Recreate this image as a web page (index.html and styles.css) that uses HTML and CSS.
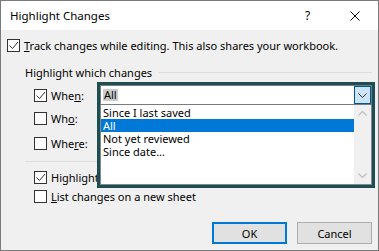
FILE: index.html
```html
<!DOCTYPE html>
<html>
<head>
<meta charset="utf-8">
<link rel="stylesheet" href="styles.css">
</head>
<body>
<div class="window">
  <div class="titlebar">
    <span class="title">Highlight Changes</span>
    <span class="help">?</span>
    <svg class="close" width="10" height="10" viewBox="0 0 10 10"><path d="M0.5 0.5 L9.5 9.5 M9.5 0.5 L0.5 9.5" stroke="#000" stroke-width="1" fill="none"/></svg>
  </div>
  <div class="content">
    <label class="row track">
      <span class="cb"><svg width="11" height="11" viewBox="0 0 11 11"><path d="M1.5 5.5 L4.5 8.5 L10 2" stroke="#333" stroke-width="1" fill="none"/></svg></span>
      <span><u>T</u>rack changes while editing. This also shares your workbook.</span>
    </label>
    <div class="group-head">
      <span>Highlight which changes</span>
      <span class="line"></span>
    </div>
    <div class="opts">
      <label class="row opt when">
        <span class="cb"><svg width="11" height="11" viewBox="0 0 11 11"><path d="M1.5 5.5 L4.5 8.5 L10 2" stroke="#333" stroke-width="1" fill="none"/></svg></span>
        <span>Whe<u>n</u>:</span>
      </label>
      <label class="row opt who">
        <span class="cb"></span>
        <span>Wh<u>o</u>:</span>
      </label>
      <label class="row opt where">
        <span class="cb"></span>
        <span>Whe<u>r</u>e:</span>
      </label>
      <div class="sep"></div>
      <label class="row opt hl">
        <span class="cb"><svg width="11" height="11" viewBox="0 0 11 11"><path d="M1.5 5.5 L4.5 8.5 L10 2" stroke="#333" stroke-width="1" fill="none"/></svg></span>
        <span>Highlight changes on <u>s</u>creen</span>
      </label>
      <label class="row opt list">
        <span class="cb"></span>
        <span><u>L</u>ist changes on a new sheet</span>
      </label>
    </div>
    <div class="buttons">
      <button class="btn ok">OK</button>
      <button class="btn">Cancel</button>
    </div>
  </div>
  <div class="dropdown">
    <div class="combo">
      <span class="value">All</span>
      <span class="arrow"><svg width="9" height="5" viewBox="0 0 9 5"><path d="M0.5 0.5 L4.5 4.5 L8.5 0.5" stroke="#333" stroke-width="1" fill="none"/></svg></span>
    </div>
    <div class="listbox">
      <ul class="items">
        <li>Since I last saved</li>
        <li class="sel">All</li>
        <li>Not yet reviewed</li>
        <li>Since date...</li>
      </ul>
      <div class="scroll">
        <svg width="9" height="5" viewBox="0 0 9 5"><path d="M0.5 4.5 L4.5 0.5 L8.5 4.5" stroke="#c0c0c0" stroke-width="1.3" fill="none"/></svg>
        <svg width="9" height="5" viewBox="0 0 9 5"><path d="M0.5 0.5 L4.5 4.5 L8.5 0.5" stroke="#c0c0c0" stroke-width="1.3" fill="none"/></svg>
      </div>
    </div>
  </div>
</div>
</body>
</html>
```

FILE: styles.css
```css
* { box-sizing: border-box; }
html, body { margin: 0; padding: 0; background: #f0f0f0; }
body { font-family: "Noto Sans", sans-serif; font-size: 11px; color: #000; }
.window {
  position: relative;
  width: 379px;
  height: 251px;
  border: 1px solid #7a7a7a;
  background: #f0f0f0;
  overflow: hidden;
}
.titlebar {
  height: 29px;
  background: #fff;
  display: flex;
  align-items: center;
  padding-left: 9px;
}
.title { flex: 1; font-size: 11.5px; }
.help { width: 8px; margin-right: 37px; font-size: 12px; }
.close { margin-right: 18px; }
.content { padding: 9px 0 0 6px; }
.row { display: flex; align-items: center; height: 13px; line-height: 13px; white-space: nowrap; }
.cb {
  width: 13px; height: 13px;
  border: 1px solid #333;
  background: #fff;
  display: inline-flex;
  align-items: center;
  justify-content: center;
  flex: none;
  margin-right: 4px;
}
.group-head {
  display: flex;
  align-items: center;
  margin: 13px 0 0 18px;
  height: 14px;
}
.group-head .line { flex: 1; height: 1px; background: #dcdcdc; margin: 0 6px 0 7px; }
.opts { padding-left: 27px; }
.opt.when { margin-top: 10px; }
.opt.who { margin-top: 10px; }
.opt.where { margin-top: 12px; }
.sep { height: 1px; background: #dcdcdc; margin: 11px 6px 0 -9px; }
.opt.hl { margin-top: 9px; }
.opt.list { margin-top: 6px; }
.buttons { display: flex; justify-content: flex-end; gap: 10px; margin-top: 19px; padding-right: 6px; }
.btn {
  width: 75px; height: 22px;
  background: #e1e1e1;
  border: 1px solid #adadad;
  font-family: inherit; font-size: 11px; color: #000;
  padding: 0;
}
.btn.ok { border: 2px solid #0078d7; }
.dropdown {
  position: absolute;
  left: 96px; top: 81px;
  width: 278px; height: 106px;
  border: 3px solid #1d4f52;
  background: #fff;
  display: flex; flex-direction: column;
}
.combo {
  height: 20px;
  border: 1px solid #7a7a7a;
  background: #fff;
  display: flex; align-items: center;
  padding-left: 2px;
}
.combo .value { flex: none; line-height: 12px; background: #cccccc; padding: 0 1px; }
.arrow {
  width: 17px; height: 18px;
  background: #cce4f7;
  border: 1px solid #005499;
  display: flex; align-items: center; justify-content: center;
  margin-left: auto;
}
.listbox {
  flex: 1;
  border: 1px solid #828790;
  border-top: none;
  display: flex;
}
.items { list-style: none; margin: 0; padding: 1px 0 0 0; flex: 1; }
.items li { height: 13px; line-height: 13px; padding-left: 2px; }
.items li.sel { background: #0078d7; color: #fff; }
.scroll {
  width: 17px;
  background: #f0f0f0;
  display: flex; flex-direction: column; justify-content: space-between; align-items: center;
  padding: 6px 0 6px;
}
```
